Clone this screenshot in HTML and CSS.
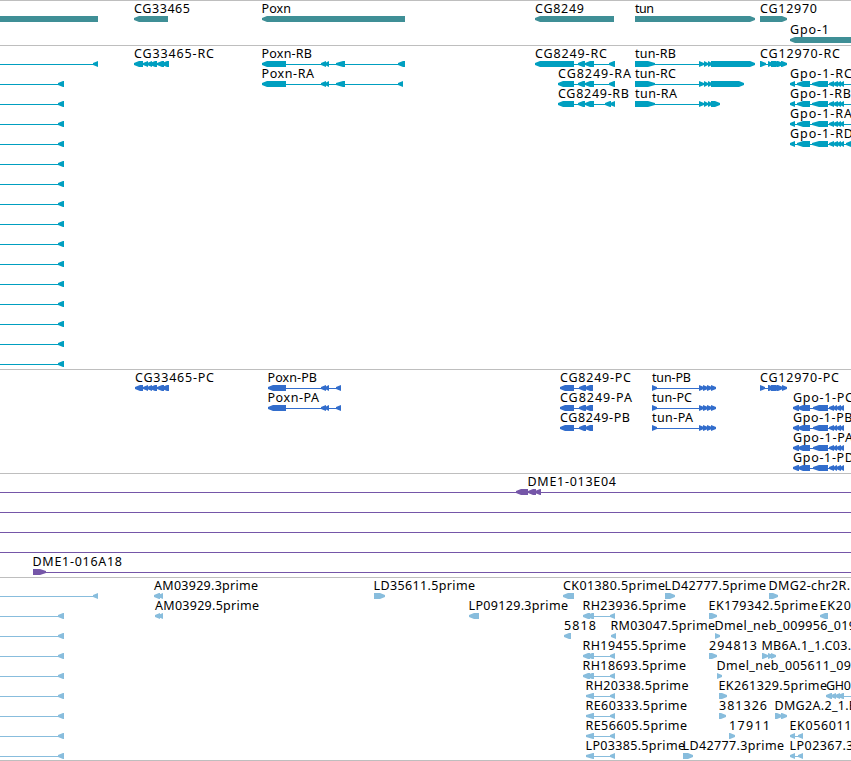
FILE: index.html
```
<!DOCTYPE html>
<html>

<head>
    <meta charset="utf-8">
    <title>Region view</title>
    <link rel="stylesheet" href="styles.css">
</head>

<body>
    <div class="view">
        <div class="track genes" id="genes"></div>
        <div class="track transcripts" id="transcripts"></div>
        <div class="track proteins" id="proteins"></div>
        <div class="track clones" id="clones"></div>
        <div class="track ests" id="ests"></div>
    </div>
    <script src="tracks.js"></script>
</body>

</html>
```
FILE: styles.css
```
body {
    margin: 0;
    background-color: #fff;
    overflow: hidden;
}

.view {
    display: flex;
    flex-direction: column;
    width: 851px;
    border-bottom: 1px solid #bebebe;
}

.track {
    border-top: 1px solid #bebebe;
    box-sizing: border-box;
    overflow: hidden;
}

.track svg {
    display: block;
    overflow: hidden;
}

.track text {
    font-family: "Noto Sans", "DejaVu Sans", sans-serif;
    font-size: 12.5px;
    fill: #000;
}

.genes {
    height: 45px;
    fill: #3f8f96;
}

.transcripts {
    height: 324px;
    fill: #009fc0;
}

.proteins {
    height: 104px;
    fill: #326dcc;
}

.clones {
    height: 104px;
    fill: #7556a8;
}

.ests {
    height: 183px;
    fill: #88bddd;
}
```
FILE: tracks.js
```
// feature: [row, dir, exons, line, label, label x, label width]
// dir is '<', '>' or '' for a plain box
// exon: [start, end, tip length]
var WIDTH = 851;
var tip = 5;

var genes = [
  [0, '', [[0,98]]],
  [0, '<', [[134,168]], null, 'CG33465', 134, 56],
  [0, '<', [[262,405]], null, 'Poxn', 261.5, 29.5],
  [0, '<', [[535,614]], null, 'CG8249', 535, 49],
  [0, '>', [[635,755]], null, 'tun', 635, 19],
  [0, '>', [[760,787]], null, 'CG12970', 760, 57],
  [1, '<', [[790,860]], null, 'Gpo-1', 790, 39]
];

var cg33465 = [[143,148],[147,152],[150,157],[157,164],[162,169]];
var tunEnd = [[699,704],[704,708],[708,712]];
var cg8249 = [[578,585],[585,594]];
var gpo = [[790,795],[797,810,6],[812,828,7],[829,834],[833,838],[837,841],[840,844]];

var transcripts = [
  [0, '<', [[93,98]], [0,98]],
  [0, '<', [[134,143]].concat(cg33465), [134,169], 'CG33465-RC', 134, 80],
  [0, '<', [[262,286],[321,326],[325,329],[336,345,7],[398,405]], [262,405], 'Poxn-RB', 261.5, 50.5],
  [1, '<', [[262,286],[321,326],[325,329],[336,345,7],[398,403]], [262,403], 'Poxn-RA', 261.5, 52.5],
  [0, '<', [[535,574]].concat(cg8249, [[609,615]]), [535,615], 'CG8249-RC', 535, 72],
  [1, '<', [[558,574]].concat(cg8249, [[609,615]]), [558,615], 'CG8249-RA', 558, 73],
  [2, '<', [[558,574]].concat(cg8249, [[605,611],[610,615]]), [558,615], 'CG8249-RB', 558, 71],
  [0, '>', [[635,655,7]].concat(tunEnd, [[711,755]]), [635,755], 'tun-RB', 635, 41],
  [1, '>', [[635,655,7]].concat(tunEnd, [[711,744]]), [635,744], 'tun-RC', 635, 41],
  [2, '>', [[635,655,7]].concat(tunEnd, [[711,720]]), [635,720], 'tun-RA', 635, 42],
  [0, '>', [[760,766],[768,773],[771,781],[777,783],[781,787]], [760,787], 'CG12970-RC', 760, 80],
  [1, '<', gpo, [790,851], 'Gpo-1-RC', 790, 62],
  [2, '<', gpo, [790,851], 'Gpo-1-RB', 790, 61],
  [3, '<', gpo, [790,851], 'Gpo-1-RA', 790, 62],
  [4, '<', gpo.concat([[846,852]]), [790,851], 'Gpo-1-RD', 790, 63]
];
for (var i = 1; i <= 15; i++) transcripts.push([i, '<', [[58,64]], [0,64]]);

var poxnP = [[268,286],[321,326],[325,329],[336,341]];
var cg8249P = [[560,574],[579,586],[585,593]];
var tunP = [[652,657],[699,704],[703,708],[707,712],[711,716]];
var gpoP = [[793,799],[798,810],[813,828,6],[829,834],[833,837],[836,841],[840,844]];

var proteins = [
  [0, '<', [[135,143]].concat(cg33465), [135,169], 'CG33465-PC', 135, 79],
  [0, '<', poxnP, [268,341], 'Poxn-PB', 267.5, 49.5],
  [1, '<', poxnP, [268,341], 'Poxn-PA', 267.5, 51.5],
  [0, '<', cg8249P, [560,593], 'CG8249-PC', 560, 71],
  [1, '<', cg8249P, [560,593], 'CG8249-PA', 560, 72],
  [2, '<', cg8249P, [560,593], 'CG8249-PB', 560, 70],
  [0, '>', tunP, [652,716], 'tun-PB', 652, 39],
  [1, '>', tunP, [652,716], 'tun-PC', 652, 40],
  [2, '>', tunP, [652,716], 'tun-PA', 652, 41],
  [0, '>', [[760,765],[768,774],[771,781],[777,783],[782,787]], [760,787], 'CG12970-PC', 760, 79],
  [1, '<', gpoP, [793,844], 'Gpo-1-PC', 793, 60],
  [2, '<', gpoP, [793,844], 'Gpo-1-PB', 793, 59.5],
  [3, '<', gpoP, [793,844], 'Gpo-1-PA', 793, 60],
  [4, '<', gpoP, [793,844], 'Gpo-1-PD', 793, 61]
];

var clones = [
  [0, '<', [[516,528],[528,536],[535,541]], [0,851], 'DME1-013E04', 527.5, 88.5],
  [1, '', [], [0,851]],
  [2, '', [], [0,851]],
  [3, '', [], [0,851]],
  [4, '>', [[33,46,6]], [33,851], 'DME1-016A18', 32.5, 89.5]
];

var rh = [[583,590],[587,594],[610,615]];
var re = [[586,594,7],[610,615]];

var ests = [
  [0, '<', [[93,98]], [0,98]],
  [0, '<', [[154,160],[158,163]], null, 'AM03929.3prime', 154, 104],
  [0, '>', [[374,385]], null, 'LD35611.5prime', 373.5, 101.5],
  [0, '<', [[563,574]], null, 'CK01380.5prime', 563, 102],
  [0, '>', [[665,675]], null, 'LD42777.5prime', 664.5, 101.5],
  [0, '>', [[769,778]], null, 'DMG2-chr2R.', 768.5, 81.5],
  [1, '<', [[155,160],[158,163]], null, 'AM03929.5prime', 155, 104],
  [1, '<', [[469,479]], null, 'LP09129.3prime', 468.5, 99.5],
  [1, '<', rh, [583,615], 'RH23936.5prime', 582.5, 103.5],
  [1, '>', [[709,717]], null, 'EK179342.5prime', 708.5, 109.5],
  [1, '<', [[820,828]], null, 'EK20', 819.5, 31.5],
  [2, '<', [[564,571]], null, '5818', 564, 32],
  [2, '<', [[611,616]], null, 'RM03047.5prime', 610.5, 104.5],
  [2, '>', [[715,720]], null, 'Dmel_neb_009956_019', 714.5, 141.5],
  [3, '<', rh, [583,615], 'RH19455.5prime', 582.5, 103.5],
  [3, '>', [[709,717]], null, '294813', 709, 48],
  [3, '>', [[762,768],[768,773],[771,776]], [762,776], 'MB6A.1_1.C03.', 761.5, 89.5],
  [4, '<', rh, [583,615], 'RH18693.5prime', 582.5, 103.5],
  [4, '>', [[717,722]], null, 'Dmel_neb_005611_09', 716.5, 134.5],
  [5, '<', re, [586,615], 'RH20338.5prime', 585.5, 103],
  [5, '>', [[719,727]], null, 'EK261329.5prime', 718.5, 108.5],
  [5, '<', [[826,832],[831,836],[835,840],[838,844]], [826,851], 'GH0', 826, 25],
  [6, '<', re, [586,615], 'RE60333.5prime', 585.5, 101.5],
  [6, '>', [[719,726]], null, '381326', 719, 48],
  [6, '>', [[775,782],[781,787]], [775,787], 'DMG2A.2_1.B', 774.5, 82.5],
  [7, '<', re, [586,615], 'RE56605.5prime', 585.5, 101.5],
  [7, '>', [[729,735]], null, '17911', 729, 41],
  [7, '<', [[790,795],[798,803]], [790,803], 'EK056011', 789.5, 62],
  [8, '<', re, [586,615], 'LP03385.5prime', 585.5, 99.5],
  [8, '>', [[683,693]], null, 'LD42777.3prime', 682.5, 101.5],
  [8, '<', [[790,795],[798,803]], [790,803], 'LP02367.3', 789.5, 64]
];
for (var i = 1; i <= 8; i++) ests.push([i, '<', [[58,64]], [0,64]]);

function exonShape(e, y, dir) {
  var a = e[0], b = e[1], pts;
  var t = Math.min(e[2] || tip, b - a);
  if (dir == '<')
    pts = [[b,y],[a+t,y],[a,y+2],[a,y+4],[a+t,y+6],[b,y+6]];
  else if (dir == '>')
    pts = [[a,y],[b-t,y],[b,y+2],[b,y+4],[b-t,y+6],[a,y+6]];
  else
    pts = [[a,y],[b,y],[b,y+6],[a,y+6]];
  return '<polygon points="' + pts.join(' ') + '"/>';
}

function drawTrack(id, features, pitch) {
  var el = document.getElementById(id);
  var h = el.clientHeight;
  var out = '<svg width="' + WIDTH + '" height="' + h + '">';
  features.forEach(function(f) {
    var y = f[0] * pitch + 15;
    if (f[3])
      out += '<rect x="' + f[3][0] + '" y="' + (y + 3) + '" width="' + (f[3][1] - f[3][0]) + '" height="1"/>';
    f[2].forEach(function(e) { out += exonShape(e, y, f[1]); });
    if (f[4])
      out += '<text x="' + f[5] + '" y="' + (y - 3) + '" textLength="' + f[6] + '">' + f[4] + '</text>';
  });
  el.innerHTML = out + '</svg>';
}

drawTrack('genes', genes, 21);
drawTrack('transcripts', transcripts, 20);
drawTrack('proteins', proteins, 20);
drawTrack('clones', clones, 20);
drawTrack('ests', ests, 20);
```
